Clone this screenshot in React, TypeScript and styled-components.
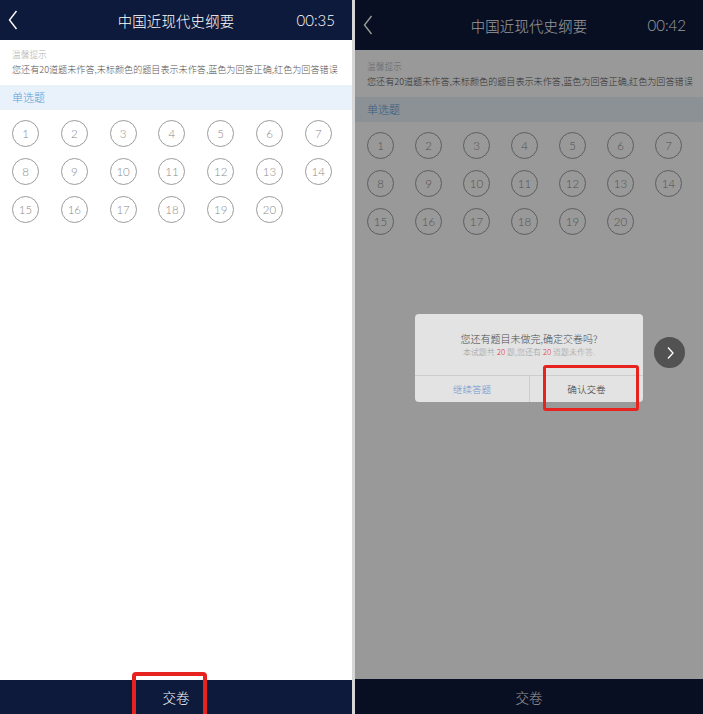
import React from "react";
import styled, { createGlobalStyle } from "styled-components";

const GlobalStyle = createGlobalStyle`
  html, body { margin: 0; padding: 0; background: #fff; }
  body { font-family: "Noto Sans CJK SC", "Noto Sans", sans-serif; font-weight: 300; }
`;

const Page = styled.div`
  display: flex;
  gap: 3px;
  width: 703px;
  height: 714px;
  overflow: hidden;
  background: #d6d6d6;
`;

const Screen = styled.div<{ $w: number }>`
  position: relative;
  flex: none;
  width: ${(p) => p.$w}px;
  height: 100%;
  display: flex;
  flex-direction: column;
  background: #fff;
  overflow: hidden;
`;

const Header = styled.header<{ $h: number }>`
  flex: none;
  height: ${(p) => p.$h}px;
  background: #0e1a3b;
  display: grid;
  grid-template-columns: 1fr auto 1fr;
  align-items: center;
  padding: 0 8px;
  color: #fff;
`;

const Back = styled.svg`
  display: block;
`;

const Title = styled.div`
  font-size: 14.4px;
  font-weight: 300;
  letter-spacing: 0.2px;
  color: #fff;
`;

const Timer = styled.div`
  justify-self: end;
  margin-right: 9px;
  font-family: Lato, "Open Sans", sans-serif;
  font-weight: 300;
  font-size: 15px;
  color: #fff;
`;

const Body = styled.main`
  flex: 1;
  display: flex;
  flex-direction: column;
`;

const Tips = styled.div<{ $top: number }>`
  padding: ${(p) => p.$top}px 10px 0 12px;
`;

const TipLabel = styled.div`
  font-size: 8.7px;
  line-height: 14px;
  color: #adadad;
`;

const TipText = styled.div`
  font-size: 9.1px;
  line-height: 14px;
  color: #555;
  white-space: nowrap;
`;

const Band = styled.div`
  margin-top: 9px;
  height: 25px;
  line-height: 25px;
  padding-left: 12px;
  background: #e9f2fb;
  color: #5b9bd5;
  font-size: 11px;
`;

const Grid = styled.div<{ $gap: number; $left: number }>`
  display: grid;
  grid-template-columns: repeat(7, 27px);
  column-gap: ${(p) => p.$gap}px;
  row-gap: 11px;
  padding: 10px 0 0 ${(p) => p.$left}px;
`;

const Circle = styled.div`
  width: 27px;
  height: 27px;
  box-sizing: border-box;
  border: 1px solid #9c9c9c;
  border-radius: 50%;
  display: flex;
  align-items: center;
  justify-content: center;
  font-family: Lato, "Open Sans", sans-serif;
  font-weight: 300;
  font-size: 11.5px;
  color: #8a8a8a;
`;

const Footer = styled.footer<{ $h: number }>`
  position: relative;
  flex: none;
  height: ${(p) => p.$h}px;
  background: #0e1a3b;
  display: flex;
  align-items: center;
  justify-content: center;
  color: #fff;
  font-size: 13.5px;
`;

const Mark = styled.div<{ $l: number; $t: number; $w: number; $h: number; $b: number }>`
  position: absolute;
  left: ${(p) => p.$l}px;
  top: ${(p) => p.$t}px;
  width: ${(p) => p.$w}px;
  height: ${(p) => p.$h}px;
  box-sizing: border-box;
  border: ${(p) => p.$b}px solid #e6231f;
  border-radius: ${(p) => p.$b}px;
  pointer-events: none;
`;

const Overlay = styled.div`
  position: absolute;
  inset: 0;
  background: rgba(0, 0, 0, 0.4);
  display: flex;
  align-items: center;
  justify-content: center;
`;

const Dialog = styled.div`
  position: relative;
  width: 228px;
  margin-top: 2px;
  background: #e3e3e3;
  border-radius: 4px;
  display: flex;
  flex-direction: column;
`;

const DialogBody = styled.div`
  padding: 18px 0 17px;
  text-align: center;
  border-bottom: 1px solid #cdcdcd;
`;

const DialogTitle = styled.div`
  font-size: 10px;
  line-height: 14px;
  color: #4c4c4c;
`;

const DialogSub = styled.div`
  font-size: 8px;
  line-height: 12px;
  color: #9c9c9c;
`;

const Red = styled.span`
  color: #e0413c;
`;

const Actions = styled.div`
  display: grid;
  grid-template-columns: 1fr 1fr;
  height: 26px;
`;

const Action = styled.div<{ $primary?: boolean }>`
  display: flex;
  align-items: center;
  justify-content: center;
  font-size: 9.6px;
  color: ${(p) => (p.$primary ? "#3a3a3a" : "#6b98cf")};
  & + & {
    border-left: 1px solid #cdcdcd;
  }
`;

const NextBtn = styled.div`
  position: absolute;
  left: 299px;
  top: 337px;
  width: 31px;
  height: 31px;
  border-radius: 50%;
  background: #525252;
  display: flex;
  align-items: center;
  justify-content: center;
`;

const nums = Array.from({ length: 20 }, (_, i) => i + 1);

type PanelProps = {
  width: number;
  headerH: number;
  footerH: number;
  tipsTop: number;
  gap: number;
  left: number;
  time: string;
  children?: React.ReactNode;
  footerMark?: boolean;
};

function Panel({ width, headerH, footerH, tipsTop, gap, left, time, children, footerMark }: PanelProps) {
  return (
    <Screen $w={width}>
      <Header $h={headerH}>
        <Back width="10" height="20" viewBox="0 0 10 20">
          <polyline points="8.5,1 1.5,10 8.5,19" fill="none" stroke="#fff" strokeWidth="1.4" />
        </Back>
        <Title>中国近现代史纲要</Title>
        <Timer>{time}</Timer>
      </Header>
      <Body>
        <Tips $top={tipsTop}>
          <TipLabel>温馨提示</TipLabel>
          <TipText>您还有20道题未作答,未标颜色的题目表示未作答,蓝色为回答正确,红色为回答错误</TipText>
        </Tips>
        <Band>单选题</Band>
        <Grid $gap={gap} $left={left}>
          {nums.map((n) => (
            <Circle key={n}>{n}</Circle>
          ))}
        </Grid>
      </Body>
      <Footer $h={footerH}>
        交卷
        {footerMark && <Mark $l={132} $t={-8} $w={75} $h={48} $b={4} />}
      </Footer>
      {children}
    </Screen>
  );
}

export default function App() {
  return (
    <>
      <GlobalStyle />
      <Page>
        <Panel width={352} headerH={40} footerH={34} tipsTop={8} gap={21.8} left={12} time="00:35" footerMark />
        <Panel width={348} headerH={50} footerH={35} tipsTop={10} gap={21} left={12} time="00:42">
          <Overlay>
            <Dialog>
              <DialogBody>
                <DialogTitle>您还有题目未做完,确定交卷吗?</DialogTitle>
                <DialogSub>
                  本试题共 <Red>20</Red> 题,您还有 <Red>20</Red> 道题未作答.
                </DialogSub>
              </DialogBody>
              <Actions>
                <Action>继续答题</Action>
                <Action $primary>确认交卷</Action>
              </Actions>
              <Mark $l={128} $t={51} $w={96} $h={46} $b={3} />
            </Dialog>
          </Overlay>
          <NextBtn>
            <svg width="10" height="14" viewBox="0 0 10 14">
              <polyline points="3,1.5 8,7 3,12.5" fill="none" stroke="#fff" strokeWidth="1.3" />
            </svg>
          </NextBtn>
        </Panel>
      </Page>
    </>
  );
}
